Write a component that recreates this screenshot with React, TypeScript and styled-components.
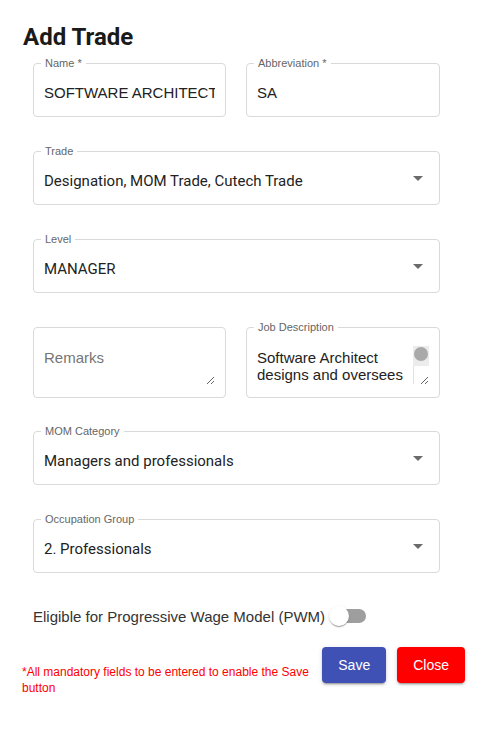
import styled, { createGlobalStyle } from 'styled-components';

const GlobalStyle = createGlobalStyle`
  * { box-sizing: border-box; }
  body {
    margin: 0;
    background: #fff;
    font-family: "Liberation Sans", Arial, sans-serif;
  }
`;

const Dialog = styled.div`
  width: 490px;
  min-height: 745px;
  padding: 21px 25px 0 23px;
  background: #fff;
`;

const Title = styled.h2`
  margin: 0 0 4px;
  font-family: Roboto, sans-serif;
  font-size: 24px;
  font-weight: 700;
  line-height: 32px;
  color: #1a1a1a;
`;

const Form = styled.div`
  width: 407px;
  margin-left: 10px;
  display: grid;
  grid-template-columns: 193px 194px;
  column-gap: 20px;
  row-gap: 28px;
`;

const Field = styled.fieldset<{ $wide?: boolean; $tall?: boolean }>`
  margin: 0 0 ${(p) => (p.$tall ? '-1px' : '0')};
  min-width: 0;
  padding: 0 10px 0 7px;
  border: 1px solid #d9d9d9;
  border-radius: 4px;
  grid-column: ${(p) => (p.$wide ? 'span 2' : 'auto')};
`;

const Legend = styled.legend<{ $empty?: boolean }>`
  height: 12px;
  padding: ${(p) => (p.$empty ? '0' : '0 4px')};
  font-size: 11px;
  line-height: 12px;
  color: #666;
`;

const Body = styled.div<{ $tall?: boolean }>`
  position: relative;
  height: ${(p) => (p.$tall ? '64px' : '47px')};
  display: flex;
  align-items: center;
`;

const Input = styled.input`
  width: 100%;
  padding: 0 0 0 3px;
  border: none;
  outline: none;
  background: transparent;
  font-family: "Liberation Sans", Arial, sans-serif;
  font-size: 15px;
  color: #222;
`;

const SelectValue = styled.div`
  flex: 1;
  padding-left: 3px;
  font-family: Roboto, sans-serif;
  font-size: 15px;
  color: #222;
`;

const Arrow = styled.svg`
  width: 24px;
  height: 24px;
  margin: 0 -1px 6px 0;
  fill: #6b6b6b;
`;

const TextArea = styled.textarea<{ $scroll?: boolean }>`
  width: 100%;
  height: 36px;
  margin-top: 4px;
  padding: 0 ${(p) => (p.$scroll ? '17px' : '0')} 0 3px;
  border: none;
  outline: none;
  overflow: hidden;
  resize: vertical;
  background: transparent;
  font-family: "Liberation Sans", Arial, sans-serif;
  font-size: 15px;
  line-height: 17px;
  color: #222;

  &::placeholder {
    color: #757575;
  }
`;

const ScrollBar = styled.div`
  position: absolute;
  right: 0;
  top: 13px;
  width: 16px;
  display: flex;
  flex-direction: column;
  pointer-events: none;
`;

const ScrollTrack = styled.div`
  height: 20px;
  padding: 1px 1px 0;
  background: #ececec;
`;

const ScrollThumb = styled.div`
  width: 14px;
  height: 14px;
  border-radius: 50%;
  background: #a9a9a9;
`;

const ScrollCorner = styled.div`
  height: 18px;
  border-left: 1px solid #e2e2e2;
`;

const SwitchRow = styled.label`
  margin: 33px 0 0 10px;
  display: flex;
  align-items: center;
  gap: 4px;
  font-size: 15px;
  color: #333;
`;

const Switch = styled.span`
  position: relative;
  width: 38px;
  height: 20px;
`;

const Track = styled.span`
  position: absolute;
  left: 9px;
  top: 3px;
  width: 28px;
  height: 14px;
  border-radius: 7px;
  background: #9e9e9e;
`;

const Thumb = styled.span`
  position: absolute;
  left: 0;
  top: 0;
  width: 20px;
  height: 20px;
  border-radius: 50%;
  background: #fff;
  box-shadow: 0 2px 1px -1px rgba(0, 0, 0, 0.2), 0 1px 1px rgba(0, 0, 0, 0.14),
    0 1px 3px rgba(0, 0, 0, 0.12);
`;

const Footer = styled.div`
  margin: 21px 0 0 -1px;
  display: flex;
  justify-content: space-between;
  align-items: flex-start;
`;

const ErrorText = styled.p`
  width: 290px;
  margin: 0;
  padding-top: 17px;
  font-size: 12px;
  line-height: 16px;
  color: #f00;
`;

const Buttons = styled.div`
  display: flex;
  gap: 11px;
`;

const Button = styled.button<{ $color: string }>`
  height: 36px;
  padding: 0 16px;
  border: none;
  border-radius: 4px;
  background: ${(p) => p.$color};
  color: #fff;
  font-family: "Liberation Sans", Arial, sans-serif;
  font-size: 14px;
  cursor: pointer;
  box-shadow: 0 3px 1px -2px rgba(0, 0, 0, 0.2), 0 2px 2px rgba(0, 0, 0, 0.14),
    0 1px 5px rgba(0, 0, 0, 0.12);
`;

const DropArrow = () => (
  <Arrow viewBox="0 0 24 24">
    <path d="M7 10l5 5 5-5z" />
  </Arrow>
);

const SelectField = ({ label, value }: { label: string; value: string }) => (
  <Field $wide>
    <Legend>{label}</Legend>
    <Body>
      <SelectValue>{value}</SelectValue>
      <DropArrow />
    </Body>
  </Field>
);

const jobDescription =
  'Software Architect designs and oversees the overall structure of software systems, ' +
  'defining technical standards and guiding development teams.';

const App = () => {
  return (
    <Dialog>
      <GlobalStyle />
      <Title>Add Trade</Title>
      <Form>
        <Field>
          <Legend>Name *</Legend>
          <Body>
            <Input defaultValue="SOFTWARE ARCHITECT" />
          </Body>
        </Field>
        <Field>
          <Legend>Abbreviation *</Legend>
          <Body>
            <Input defaultValue="SA" />
          </Body>
        </Field>
        <SelectField label="Trade" value="Designation, MOM Trade, Cutech Trade" />
        <SelectField label="Level" value="MANAGER" />
        <Field $tall>
          <Legend $empty />
          <Body $tall>
            <TextArea placeholder="Remarks" />
          </Body>
        </Field>
        <Field $tall>
          <Legend>Job Description</Legend>
          <Body $tall>
            <TextArea $scroll defaultValue={jobDescription} />
            <ScrollBar>
              <ScrollTrack>
                <ScrollThumb />
              </ScrollTrack>
              <ScrollCorner />
            </ScrollBar>
          </Body>
        </Field>
        <SelectField label="MOM Category" value="Managers and professionals" />
        <SelectField label="Occupation Group" value="2. Professionals" />
      </Form>
      <SwitchRow>
        Eligible for Progressive Wage Model (PWM)
        <Switch>
          <Track />
          <Thumb />
        </Switch>
      </SwitchRow>
      <Footer>
        <ErrorText>*All mandatory fields to be entered to enable the Save button</ErrorText>
        <Buttons>
          <Button $color="#3f51b5">Save</Button>
          <Button $color="#ff0000">Close</Button>
        </Buttons>
      </Footer>
    </Dialog>
  );
};

export default App;
